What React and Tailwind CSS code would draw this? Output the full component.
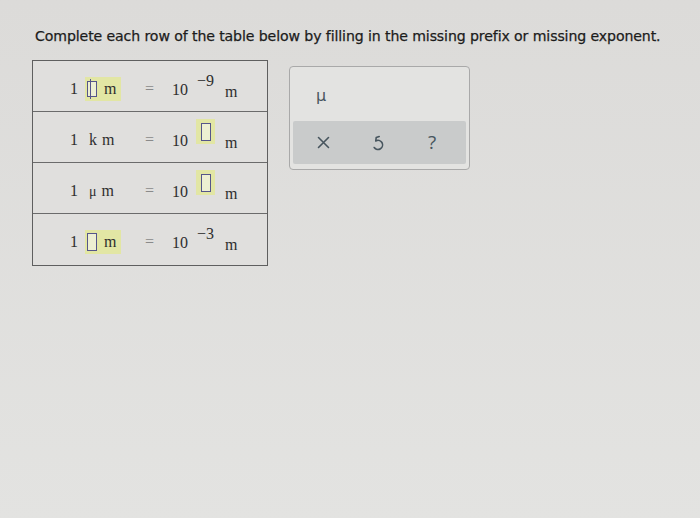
import { useState } from "react";

function Blank({ cursor, tall }) {
  return (
    <span className={`relative inline-block w-[10px] ${tall ? "h-[18px]" : "h-[16px]"} border-[1.5px] border-[#55558a] bg-[#edefd2]`}>
      {cursor && <span className="absolute left-[2px] top-[-3px] h-[20px] w-px bg-[#55558a]" />}
    </span>
  );
}

export default function App() {
  const rows = [
    { prefix: null, exponent: "-9" },
    { prefix: "k", exponent: null },
    { prefix: "μ", exponent: null },
    { prefix: null, exponent: "-3" },
  ];
  const [active] = useState(0);

  return (
    <div className="w-[700px] h-[518px] bg-gradient-to-b from-[#dcdbd9] to-[#e3e3e1] overflow-hidden" style={{ fontFamily: "'DejaVu Sans', sans-serif" }}>
      <p className="pt-[26px] pl-[35px] text-[14.1px] text-[#1c1c1c] tracking-[-0.1px] [-webkit-text-stroke:0.25px_#1c1c1c]">
        Complete each row of the table below by filling in the missing prefix or missing exponent.
      </p>

      <div className="flex items-start mt-[13px] ml-[32px]">
        <div className="w-[236px] border border-[#5f5f5f] bg-[#e0dfdd] text-[16px] text-[#2e2e2e]" style={{ fontFamily: "'Liberation Serif', serif" }}>
          {rows.map((r, i) => (
            <div key={i} className={`flex items-center h-[51px] ${i < rows.length - 1 ? "border-b border-[#6b6b6b]" : ""}`}>
              <span className="w-[37px]" />
              <span className="w-[15px] mt-[5px]">1</span>
              <span className="w-[60px] flex items-center mt-[5px]">
                {r.prefix === null ? (
                  <span className="flex items-center gap-[7px] bg-[#e2e6a4] h-[24px] pl-[2px] pr-[5px]">
                    <Blank cursor={i === active} tall={i !== active} />
                    <span>m</span>
                  </span>
                ) : (
                  <span className="pl-[4px]">
                    <span className={r.prefix === "μ" ? "text-[14px]" : ""}>{r.prefix}</span>
                    <span className="ml-[5px]">m</span>
                  </span>
                )}
              </span>
              <span className="w-[27px] mt-[5px] text-[#8a8a8a]">=</span>
              <span className="w-[24px] mt-[7px]">10</span>
              <span className="w-[29px] flex items-center mb-[11px]">
                {r.exponent === null ? (
                  <span className="flex items-center justify-center w-[19px] h-[25px] bg-[#e2e6a4]">
                    <Blank tall />
                  </span>
                ) : (
                  <span className="ml-[1px]">{r.exponent.replace("-", "−")}</span>
                )}
              </span>
              <span className="mt-[11px]">m</span>
            </div>
          ))}
        </div>

        <div className="ml-[21px] mt-[6px] w-[181px] h-[104px] border border-[#a9a9a9] rounded-[4px] bg-[#e3e3e1] p-[3px] flex flex-col">
          <div className="h-[51px] flex items-center pl-[23px] text-[16px] text-[#4a5660]">μ</div>
          <div className="h-[43px] bg-[#c9cbcb] rounded-[2px] flex items-center text-[#47555e]">
            <span className="w-[58px] flex justify-center pl-[2px]">
              <svg width="13" height="13" viewBox="0 0 13 13" fill="none" stroke="currentColor" strokeWidth="1.6" strokeLinecap="round">
                <path d="M1.5 1.5 L11.5 11.5 M11.5 1.5 L1.5 11.5" />
              </svg>
            </span>
            <span className="w-[54px] flex justify-center">
              <svg width="14" height="16" viewBox="0 0 14 16" fill="none" stroke="currentColor" strokeWidth="1.6" strokeLinecap="round" strokeLinejoin="round">
                <path d="M4.8 5.8 A4.6 4.6 0 1 1 3.2 12.5" />
                <path d="M8.2 1.6 L5.2 2.6 L4.8 5.8" />
              </svg>
            </span>
            <span className="w-[54px] flex justify-center text-[19px] leading-none" style={{ fontFamily: "'Open Sans', sans-serif" }}>?</span>
          </div>
        </div>
      </div>
    </div>
  );
}
